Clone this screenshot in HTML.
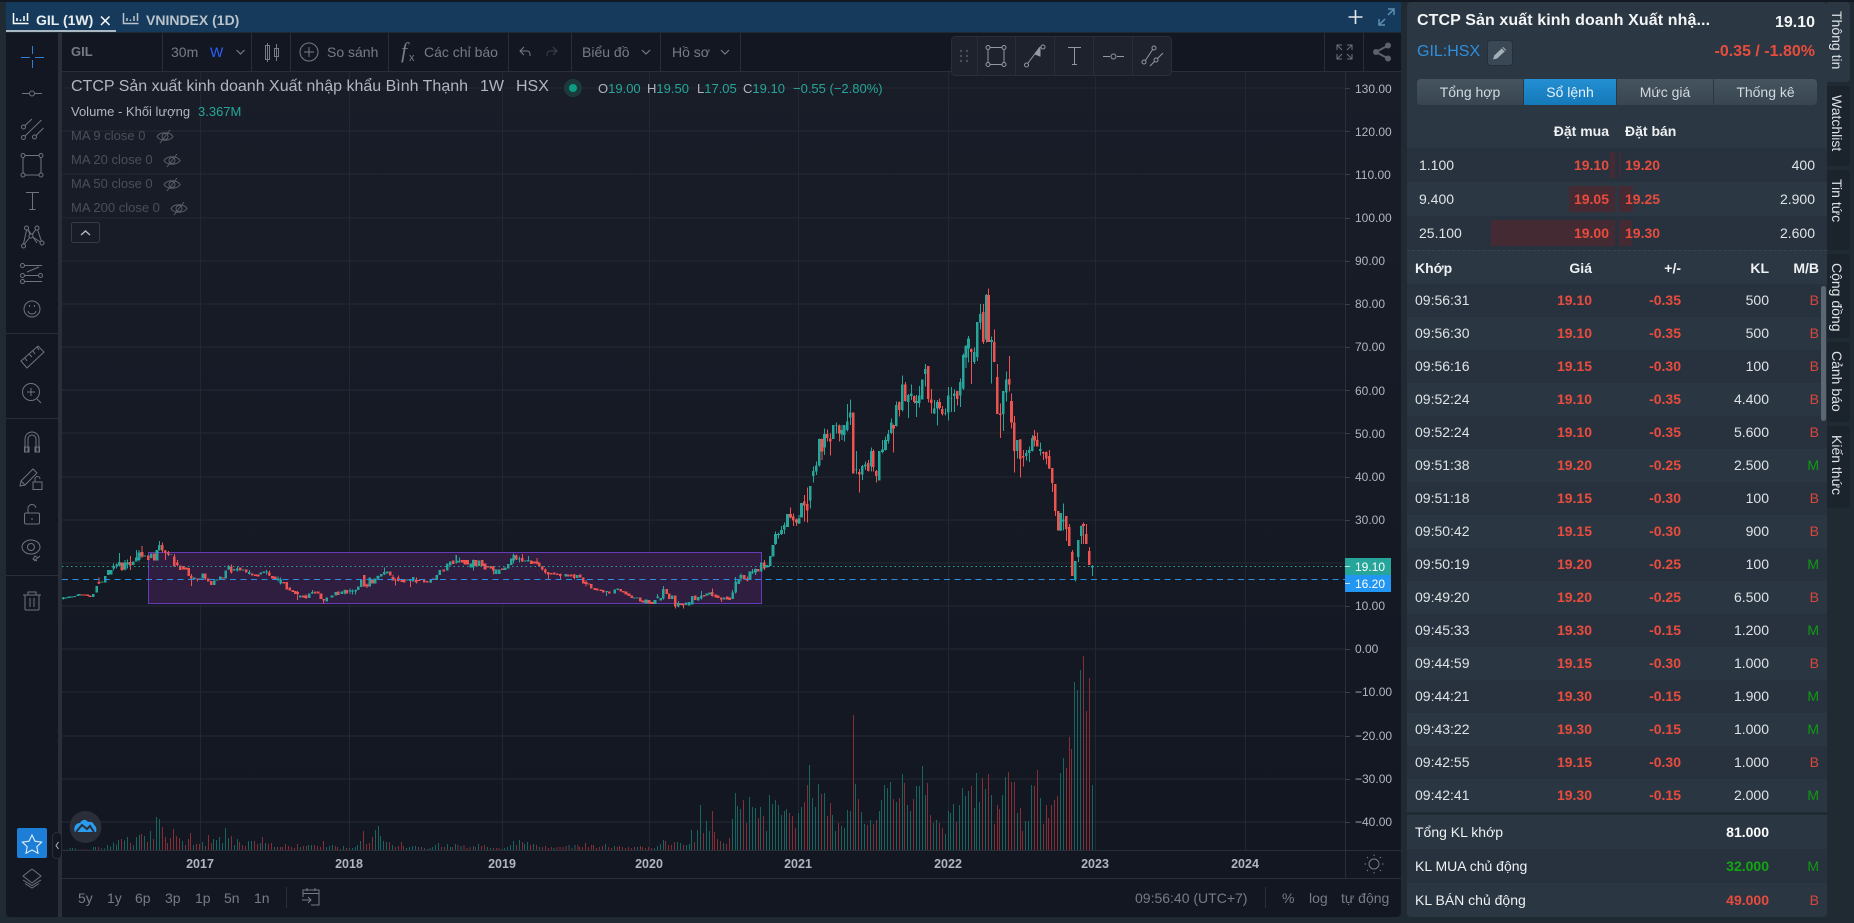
<!DOCTYPE html>
<html lang="vi"><head><meta charset="utf-8"><title>GIL (1W)</title>
<style>
*{box-sizing:border-box}
html,body{margin:0;padding:0;width:1854px;height:923px;overflow:hidden;background:#1f2a33;font-family:"Liberation Sans",sans-serif}
.a{position:absolute}
.t{position:absolute;white-space:nowrap;line-height:20px;height:20px}
#sv{position:absolute;left:0;top:0}
.bar{position:absolute;background:#442a33}
.r{height:33px;position:relative;font-size:14px;line-height:33px;color:#dfe3e6}
.r.l{background:#2a3641}.r.k{background:#28323e}
.r span{position:absolute;white-space:nowrap}
.c1{left:8px}.c2{right:235px;font-weight:bold;color:#e84c3d}.c3{right:146px;font-weight:bold;color:#e84c3d}.c4{right:58px}.c5{right:8px}
.B{color:#d9483b}.M{color:#0f9a12}
.st{position:absolute;left:1827px;width:23px;background:#1b232d;border-radius:0 4px 4px 0;color:#dfe3e6;font-size:14px;writing-mode:vertical-rl;text-align:left;line-height:20px;padding-top:9px;padding-right:3px;white-space:nowrap}
.seg{position:absolute;top:79px;height:26px;text-align:center;line-height:26px;font-size:14px;color:#d3d9de;background:linear-gradient(#45545f,#394652)}
.tb{position:absolute;top:33px;width:1px;height:38px;background:#2a2e39}
.g{color:#787b86}
.te{color:#26a69a}
.ma{color:#4a4e59;font-size:13px}
.pr{font-size:14px;font-weight:bold;color:#e84c3d}
</style></head><body>
<div class="a" style="left:0;top:0;width:1854px;height:2px;background:#131922"></div>
<!-- tab bar -->
<div class="a" style="left:6px;top:2px;width:1395px;height:30px;background:#163a5c"></div>
<div class="a" style="left:6px;top:30px;width:110px;height:2px;background:#a9b8c2"></div>
<!-- left toolbar -->
<div class="a" style="left:6px;top:33px;width:52px;height:884px;background:#131722;border-radius:0 0 0 4px"></div>
<div class="a" style="left:58px;top:33px;width:4px;height:884px;background:#2a2e39"></div>
<!-- top toolbar -->
<div class="a" style="left:62px;top:33px;width:1339px;height:38px;background:#131722"></div>
<div class="a" style="left:62px;top:71px;width:1339px;height:1px;background:#2a2e39"></div>
<div class="tb" style="left:162px"></div><div class="tb" style="left:251px"></div><div class="tb" style="left:290px"></div><div class="tb" style="left:388px"></div><div class="tb" style="left:508px"></div><div class="tb" style="left:571px"></div><div class="tb" style="left:660px"></div><div class="tb" style="left:740px"></div><div class="tb" style="left:1324px"></div><div class="tb" style="left:1363px"></div>
<!-- chart bg -->
<div class="a" style="left:62px;top:72px;width:1339px;height:845px;background:linear-gradient(#191d28,#131722 88%);border-radius:0 0 4px 0"></div>
<div class="a" style="left:62px;top:878px;width:1339px;height:1px;background:#2a2e39"></div>

<svg id="sv" width="1854" height="923" viewBox="0 0 1854 923" fill="none" xmlns="http://www.w3.org/2000/svg">
<!-- grid -->
<path shape-rendering="crispEdges" stroke="#252933" d="M62 88H1345M62 131H1345M62 174H1345M62 218H1345M62 261H1345M62 304H1345M62 347H1345M62 390H1345M62 433H1345M62 477H1345M62 520H1345M62 563H1345M62 606H1345M62 649H1345M62 692H1345M62 736H1345M62 779H1345M62 822H1345"/>
<path shape-rendering="crispEdges" stroke="#232731" d="M200.5 72V850M349.5 72V850M502.5 72V850M649.5 72V850M798.5 72V850M948.5 72V850M1095.5 72V850M1245.5 72V850"/>
<path shape-rendering="crispEdges" stroke="#2a2e39" d="M1345.5 72V878M62 850.5H1401"/>
<!-- purple zone -->
<rect x="148.5" y="552.5" width="613" height="51" fill="#2f1e40" stroke="#673ab7" shape-rendering="crispEdges"/>
<!-- volume left -->
<g transform="translate(60 790) scale(.33333)" stroke-width="3" shape-rendering="crispEdges">
<path stroke="#18655f" d="M12 178V180M21 178V180M30 174V180M37 174V180M46 175V180M56 178V180M100 171V180M107 171V180M124 175V180M133 175V180M142 165V180M152 170V180M160 158V180M169 163V180M176 150V180M194 151V180M202 141V180M220 167V180M229 141V180M238 135V180M253 138V180M271 123V180M289 81V180M298 87V180M367 153V180M400 165V180M427 156V180M461 147V180M470 150V180M478 141V180M487 159V180M496 114V180M505 144V180M523 165V180M532 147V180M565 153V180M574 153V180M601 159V180M616 159V180M643 171V180M721 171V180M745 165V180M754 165V180M799 171V180M808 168V180M817 165V180M850 168V180M868 174V180M877 174V180M886 171V180M893 165V180M901 153V180M946 120V180M955 108V180M961 138V180M970 153V180M979 156V180M997 165V180M1040 174V180M1049 171V180M1058 168V180M1067 168V180M1085 171V180M1103 177V180M1110 174V180M1117 171V180M1126 165V180M1135 159V180M1162 162V180M1171 171V180M1187 162V180M1203 168V180M1240 168V180M1256 162V180M1283 171V180M1292 174V180M1326 177V180M1333 174V180M1342 171V180M1351 165V180M1360 153V180M1378 150V180M1394 162V180M1403 156V180M1421 162V180M1439 171V180M1482 174V180M1527 165V180M1545 165V180"/>
<path stroke="#862e36" d="M63 178V180M72 178V180M80 178V180M90 178V180M115 171V180M185 147V180M211 159V180M245 132V180M262 156V180M280 147V180M307 111V180M316 141V180M323 159V180M331 144V180M340 117V180M349 138V180M358 144V180M376 165V180M385 147V180M391 129V180M409 162V180M418 162V180M436 168V180M445 135V180M454 159V180M514 138V180M538 156V180M547 165V180M556 168V180M583 153V180M592 162V180M607 141V180M625 162V180M634 159V180M652 171V180M661 171V180M668 171V180M677 162V180M685 168V180M694 171V180M703 174V180M712 162V180M730 168V180M739 168V180M763 165V180M772 168V180M781 171V180M790 153V180M826 168V180M832 171V180M841 177V180M859 174V180M910 123V180M919 162V180M928 159V180M937 141V180M988 156V180M1006 171V180M1015 168V180M1024 156V180M1031 168V180M1076 171V180M1094 174V180M1144 171V180M1153 171V180M1178 171V180M1194 165V180M1212 165V180M1221 174V180M1230 171V180M1247 171V180M1265 168V180M1274 165V180M1301 174V180M1310 174V180M1317 174V180M1369 165V180M1387 156V180M1412 165V180M1430 165V180M1448 171V180M1457 168V180M1466 174V180M1475 171V180M1491 171V180M1500 171V180M1509 171V180M1518 168V180M1536 174V180M1554 165V180"/>
</g>
<!-- volume right -->
<g transform="translate(570 740) scale(.33333)" stroke-width="3" shape-rendering="crispEdges">
<path stroke="#18655f" d="M106 312V330M133 318V330M202 321V330M253 324V330M262 318V330M271 312V330M280 300V330M322 306V330M331 309V330M349 315V330M358 312V330M364 270V330M382 270V330M391 195V330M409 243V330M418 273V330M460 309V330M487 237V330M496 159V330M502 198V330M511 207V330M538 171V330M547 201V330M556 204V330M571 201V330M589 273V330M598 165V330M607 192V330M616 180V330M625 195V330M634 225V330M643 213V330M649 207V330M685 219V330M694 201V330M718 75V330M727 174V330M736 201V330M745 132V330M763 159V330M787 225V330M796 273V330M814 258V330M823 264V330M832 210V330M841 213V330M856 132V330M874 216V330M883 252V330M901 240V330M928 213V330M934 180V330M943 135V330M952 144V330M961 126V330M979 186V330M997 102V330M1012 195V330M1021 213V330M1039 138V330M1048 138V330M1057 78V330M1066 165V330M1090 249V330M1099 240V330M1126 282V330M1135 213V330M1141 219V330M1150 192V330M1168 195V330M1177 144V330M1186 168V330M1195 153V330M1213 204V330M1219 99V330M1228 186V330M1246 147V330M1264 165V330M1297 165V330M1306 111V330M1342 219V330M1366 243V330M1375 243V330M1384 135V330M1411 174V330M1471 99V330M1480 54V330"/>
<path stroke="#862e36" d="M28 321V330M37 321V330M46 309V330M55 321V330M64 315V330M70 315V330M79 324V330M88 321V330M97 318V330M115 321V330M124 324V330M142 321V330M148 318V330M157 321V330M166 324V330M175 321V330M184 324V330M193 321V330M211 318V330M217 321V330M226 324V330M235 321V330M244 324V330M286 303V330M295 315V330M304 315V330M313 306V330M340 315V330M373 306V330M400 279V330M427 213V330M433 276V330M442 297V330M451 303V330M469 312V330M478 294V330M520 180V330M529 249V330M565 234V330M580 228V330M658 219V330M667 228V330M676 264V330M703 186V330M712 135V330M754 162V330M772 228V330M781 189V330M805 249V330M850 -75V330M865 177V330M892 255V330M910 252V330M919 240V330M970 177V330M988 174V330M1003 129V330M1030 177V330M1072 129V330M1081 225V330M1108 249V330M1117 264V330M1159 246V330M1204 138V330M1237 114V330M1255 102V330M1273 252V330M1282 195V330M1288 207V330M1315 96V330M1324 126V330M1333 126V330M1351 204V330M1357 273V330M1393 138V330M1402 90V330M1420 252V330M1429 195V330M1435 234V330M1444 195V330M1453 180V330M1462 168V330M1489 84V330"/>
</g>
<g shape-rendering="crispEdges"><path stroke="#862e36" d="M1069.5 737V850M1071.5 749V850M1083.5 656V850M1086.5 711V850M1089.5 678V850"/><path stroke="#18655f" d="M1074.5 682V850M1077.5 690V850M1080.5 670V850M1092.5 785V850"/></g>

<!-- candles group 1 -->
<g transform="translate(60 530) scale(.33333)" shape-rendering="crispEdges">
<path stroke="#26a69a" stroke-width="3" d="M10 201V209M161 100V122M170 100V116M178 69V110M195 90V122M203 88V116M229 60V95M237 60V95M298 33V62M506 105V120M532 110V125M568 120V133M620 120V133M654 140V155M662 143V163M757 180V192M855 178V193M870 176V192M878 178V194M887 178V194M954 136V148M973 113V135M1190 75V100M1112 147V159"/>
<path stroke="#ef5350" stroke-width="3" d="M117 142V162M186 97V123M211 78V120M246 48V84M307 38V68M316 60V90M325 63V78M343 72V110M352 90V110M394 132V168M412 145V155M436 130V150M514 103V130M628 122V138M713 183V210M738 194V207M791 207V220M921 160V174M999 135V152M1006 145V167M1015 136V155M1051 147V171M1069 143V160"/>
<path stroke="#26a69a" stroke-width="8" d="M10 203V207M18 203V206M27 200V204M36 199V202M44 198V201M53 194V198M58 192V197M100 192V201M110 168V187M127 154V158M136 138V158M145 120V135M153 120V133M161 108V115M170 103V110M178 96V107M195 98V118M203 97V104M220 95V105M229 82V95M237 67V90M254 76V80M274 70V84M291 60V92M298 45V60M333 72V74M403 143V149M420 144V146M428 130V146M463 151V165M471 148V152M481 140V150M497 122V145M506 108V118M523 117V122M532 115V122M550 118V121M568 126V132M602 127V133M611 125V129M620 125V128M654 146V150M662 148V161M721 196V202M748 190V204M757 186V190M800 202V214M816 196V203M827 186V196M845 185V192M855 180V191M870 181V185M878 181V185M887 180V185M895 170V180M904 150V171M929 142V170M945 145V160M954 138V145M964 132V140M973 126V133M982 125V130M1042 148V152M1051 147V153M1060 141V155M1112 149V157M1130 135V150M1139 120V135M1162 100V122M1171 94V106M1190 92V98"/>
<path stroke="#ef5350" stroke-width="8" d="M66 193V197M75 193V197M83 194V198M90 196V201M117 156V160M186 97V120M211 96V106M246 66V80M265 76V90M283 70V92M307 45V62M316 62V68M325 67V73M343 80V110M352 98V105M361 106V120M370 108V118M378 112V118M386 114V138M394 138V146M412 146V149M436 131V146M445 146V155M454 153V165M489 142V145M514 110V128M541 112V122M559 118V127M577 131V136M586 133V138M594 134V139M628 128V136M637 138V146M645 139V150M671 156V160M680 156V178M689 172V182M698 180V186M706 183V192M713 186V192M730 197V202M738 197V204M766 185V190M775 185V190M783 190V207M791 207V212M835 185V195M860 180V190M913 135V170M921 164V170M937 148V160M991 124V137M999 141V152M1006 149V151M1015 142V153M1025 148V156M1033 147V157M1069 148V157M1077 150V153M1093 148V158M1102 153V158M1120 146V150M1151 118V124M1180 92V102"/>
</g>
<!-- candles group 2 -->
<g transform="translate(450 530) scale(.33333)" shape-rendering="crispEdges">
<path stroke="#26a69a" stroke-width="3" d="M18 75V100M28 82V97M70 88V122M191 70V100M208 80V98M235 78V94M470 183V198M623 192V206M640 168V208M685 213V232M754 183V208M848 180V207M857 141V190M908 118V132"/>
<path stroke="#ef5350" stroke-width="3" d="M130 108V133M199 73V90M217 72V96M261 84V103M277 108V122M286 115V132M295 126V148M331 130V148M373 132V148M408 150V170M676 197V236M700 220V236M787 175V200M814 203V216"/>
<path stroke="#26a69a" stroke-width="8" d="M25 93V97M62 100V112M70 90V112M88 92V108M138 118V132M148 118V132M165 113V120M175 102V116M184 86V105M191 75V92M208 85V88M226 91V94M235 90V94M347 132V140M382 135V144M470 183V186M494 178V191M503 176V180M553 202V205M562 202V205M588 209V220M615 210V222M623 199V204M632 204V212M640 177V206M667 196V207M685 219V229M709 218V225M718 216V226M727 198V224M745 201V212M754 197V206M771 190V196M779 187V194M823 202V208M848 187V207M857 155V188M866 147V162"/>
<path stroke="#ef5350" stroke-width="8" d="M36 90V98M45 90V104M53 90V104M78 90V108M97 90V108M105 100V118M113 108V112M122 108V116M130 110V122M157 115V120M199 76V88M217 84V94M244 92V102M252 94V100M261 94V101M268 98V110M277 110V118M286 118V128M295 126V133M304 129V133M313 127V134M322 130V135M331 132V138M355 133V140M364 134V140M373 134V144M391 133V143M400 142V160M408 156V162M416 160V164M424 162V176M434 174V180M442 176V181M452 178V183M460 180V188M478 185V190M512 177V184M520 183V188M528 185V193M537 190V198M545 196V204M571 202V214M579 212V218M597 210V220M606 216V222M650 177V192M658 190V207M676 197V229M692 220V225M700 220V226M736 196V210M763 195V200M787 186V198M797 194V202M805 197V204M814 203V208M832 200V208M839 203V210"/>
</g>
<!-- candles group 3 -->
<g transform="translate(740 270) scale(.33333)" shape-rendering="crispEdges">
<path stroke="#26a69a" stroke-width="3" d="M3 910V935M38 897V912M47 895V915M107 785V825M116 788V806M125 768V795M133 758V792M177 735V762M211 648V716M220 590V638M229 575V615M238 505V590M254 475V555M289 458V490M306 465V510M313 465V515M322 402V485M331 388V465M349 543V612M367 585V630M376 575V600M394 533V605M428 510V550M437 500V542M445 480V520M454 445V492M469 395V470M487 316V425M505 372V444M514 343V390M530 375V441M538 348V412M556 282V350M583 390V432M592 390V467M616 415V436M625 351V452M634 351V426M643 358V426M661 325V411M670 250V360M678 225V294M686 198V278M703 232V282M712 156V273M721 102V178M739 72V218M755 200V340M790 363V483M799 304V395M832 510V565M859 540V572M868 530V576M877 495V545M901 518V557M962 729V783M970 700V782M1006 873V935M1015 810V876M1024 766V822M1057 885V918"/>
<path stroke="#ef5350" stroke-width="3" d="M22 920V935M73 870V900M152 712V745M160 730V768M169 745V768M193 675V755M202 652V758M246 505V570M262 478V515M271 490V557M298 464V515M358 597V668M385 570V605M400 538V605M409 600V638M461 463V548M478 395V440M496 336V395M523 376V400M565 288V398M574 357V431M599 385V418M607 408V437M652 363V407M694 235V342M730 102V222M746 55V216M763 178V276M772 282V432M781 400V504M808 258V365M815 370V476M823 438V608M841 507V623M850 540V590M884 480V530M892 487V530M910 544V570M919 544V583M928 540V597M937 594V666M946 642V738M979 738V813M988 762V828M997 840V918M1031 757V822M1039 762V822M1048 831V885"/>
<path stroke="#26a69a" stroke-width="8.5" d="M3 915V925M30 905V930M38 905V908M47 897V908M64 877V905M81 885V892M91 858V888M99 825V860M107 792V822M116 792V795M125 780V792M133 765V778M143 732V771M177 745V760M185 699V743M211 648V692M220 603V618M229 586V605M238 507V587M254 492V533M280 465V507M289 465V467M306 480V494M313 465V495M322 454V480M331 427V442M349 598V600M367 588V614M376 583V590M394 543V590M418 543V632M428 538V546M437 510V540M445 492V513M454 457V489M469 405V468M487 343V420M505 375V396M514 370V378M530 393V399M538 376V399M547 328V388M556 297V312M583 415V431M592 396V416M616 429V431M625 376V428M634 384V386M643 370V378M661 336V377M670 255V356M678 228V263M686 205V235M703 246V276M712 156V261M721 132V158M739 75V208M755 210V216M790 363V432M799 328V368M832 510V543M859 549V558M868 540V549M877 504V543M901 537V543M962 729V782M970 748V754M1006 873V930M1015 810V861M1024 768V798M1057 888V892"/>
<path stroke="#ef5350" stroke-width="8.5" d="M13 915V928M22 925V932M55 897V905M73 877V895M152 732V742M160 740V752M169 748V758M193 695V707M202 702V722M246 507V545M262 492V504M271 505V515M298 466V490M340 427V611M358 606V614M385 579V603M400 543V591M409 603V618M461 465V476M478 396V420M496 343V393M523 378V396M565 288V387M574 388V399M599 396V414M607 417V432M652 363V387M694 237V246M730 126V216M746 75V216M763 216V276M772 321V432M781 430V435M808 327V343M815 393V458M823 457V543M841 509V567M850 558V563M884 498V512M892 510V530M910 546V551M919 546V565M928 558V595M937 594V639M946 642V723M955 723V781M979 738V777M988 771V828M997 846V918M1031 762V768M1039 792V822M1048 843V885"/>
</g>
<!-- price lines -->
<path d="M62 566.5H1345" stroke="#26a69a" stroke-dasharray="1.5 3" shape-rendering="crispEdges"/>
<path d="M62 579.5H1345" stroke="#2a8fe0" stroke-dasharray="6 4.5" shape-rendering="crispEdges"/>
<path d="M1345 88.5h5M1345 131.5h5M1345 174.5h5M1345 218.5h5M1345 261.5h5M1345 304.5h5M1345 347.5h5M1345 390.5h5M1345 433.5h5M1345 477.5h5M1345 520.5h5M1345 606.5h5M1345 649.5h5M1345 692.5h5M1345 736.5h5M1345 779.5h5M1345 822.5h5" stroke="#3a3e49" shape-rendering="crispEdges"/>
<!-- axis labels -->
<g font-family="Liberation Sans" font-size="12" fill="#b2b5be">
<text x="1355" y="93">130.00</text><text x="1355" y="136">120.00</text><text x="1355" y="179">110.00</text><text x="1355" y="222">100.00</text><text x="1355" y="265">90.00</text><text x="1355" y="308">80.00</text><text x="1355" y="351">70.00</text><text x="1355" y="395">60.00</text><text x="1355" y="438">50.00</text><text x="1355" y="481">40.00</text><text x="1355" y="524">30.00</text><text x="1355" y="610">10.00</text><text x="1355" y="653">0.00</text><text x="1355" y="696">−10.00</text><text x="1355" y="740">−20.00</text><text x="1355" y="783">−30.00</text><text x="1355" y="826">−40.00</text>
</g>
<g font-family="Liberation Sans" font-size="12.5" font-weight="bold" fill="#b2b5be" text-anchor="middle">
<text x="200" y="868">2017</text><text x="349" y="868">2018</text><text x="502" y="868">2019</text><text x="649" y="868">2020</text><text x="798" y="868">2021</text><text x="948" y="868">2022</text><text x="1095" y="868">2023</text><text x="1245" y="868">2024</text>
</g>
<rect x="1345" y="558" width="46" height="17" fill="#26a69a"/><rect x="1345" y="575" width="46" height="17" fill="#2196f3"/>
<g font-family="Liberation Sans" font-size="12" fill="#fff"><text x="1355" y="571">19.10</text><text x="1355" y="588">16.20</text></g>
<path d="M1345 566.5h5M1345 583.5h5" stroke="#fff" stroke-opacity=".7" shape-rendering="crispEdges"/>

<!-- tab icons -->
<path d="M13.5 13V23.5H28.5M17 21v-3M20.500 21v-1.500M24 21v-5M27.500 21V13" stroke="#fff" stroke-width="1.500"/>
<path d="M123.500 13V23.500H138.500M127 21v-3M130.500 21v-1.500M134 21v-5M137.500 21V13" stroke="#b8c3cc" stroke-width="1.500"/>
<path d="M101 16.500l8.500 8.500M109.500 16.500l-8.500 8.500" stroke="#fff" stroke-width="1.500"/>
<path d="M1355.500 10v14M1348.500 17h14" stroke="#e4e9ed" stroke-width="1.600"/>
<path d="M1379 19v6h6M1380 24l5-5M1394 15v-6h-6M1393 10l-5 5" stroke="#5d8fb4" stroke-width="1.500"/>
<!-- left toolbar icons -->
<path d="M32.5 46V54M32.5 60V68M21 57.5H30M35 57.5H44" stroke="#2f7fd6"/>
<g stroke="#6f737e">
<path d="M22 93.5H29.5M34.5 93.5H42"/><circle cx="32" cy="93.5" r="2.5"/>
<path d="M25 125.500L32 119M25 136L41.500 120M36 135.500L43.500 128"/><circle cx="23.500" cy="127" r="2"/><circle cx="23.500" cy="137.500" r="2"/><circle cx="34.500" cy="137" r="2"/>
<rect x="23" y="155.500" width="18" height="19.500"/><circle cx="23" cy="155.500" r="2" fill="#131722"/><circle cx="41" cy="155.500" r="2" fill="#131722"/><circle cx="23" cy="175" r="2" fill="#131722"/><circle cx="41" cy="175" r="2" fill="#131722"/>
<path d="M26 192.500H39M32.500 192.500V209.500M29.500 209.500H35.500"/>
<path d="M23 246L27 228L31 236L37 228L42 243M27 228L37 243M37 228L23 246M31 236L42 243"/><circle cx="23.500" cy="246" r="2" fill="#131722"/><circle cx="26.500" cy="228" r="2" fill="#131722"/><circle cx="37" cy="228" r="2" fill="#131722"/><circle cx="42" cy="243" r="2" fill="#131722"/><circle cx="31" cy="236" r="2" fill="#131722"/>
<path d="M25 265.500H42M25 275.500H38M25 281.500H42M27 272l12-5" stroke-dasharray="none"/><circle cx="22.500" cy="265.500" r="2"/><circle cx="22.500" cy="275.500" r="2"/><circle cx="22.500" cy="281.500" r="2"/><circle cx="40.500" cy="275.500" r="2"/>
<circle cx="32" cy="309" r="8"/><path d="M28 311c1 4 7 4 8 0"/><path d="M29.500 305v2M34.500 305v2"/>
<path d="M21 361l17-15 6 6-17 16z M25 358l2 3M29 354l3 3M33 351l2 3M37 347l2 3"/>
<circle cx="31" cy="392" r="8.500"/><path d="M37 399l4 4M31 388v8M27 392h8"/>
<path d="M25 452v-13a7 7 0 0 1 14 0v13M28 452v-13a4 4 0 0 1 8 0v13M24.500 447h4.500v5h-4.500zM35 447h4.500v5H35z"/>
<path d="M21 481l12-12 4 4-12 12-5 1z M21 481l4 4"/><rect x="33" y="482" width="9" height="7.500"/><path d="M35 482v-3a2.500 2.500 0 0 1 5 0"/>
<rect x="24.500" y="513" width="15" height="11" rx="1.500"/><path d="M28 513v-4a4 4 0 0 1 8-1"/><path d="M32 518v2" />
<ellipse cx="31" cy="547" rx="9" ry="7"/><circle cx="31" cy="547" r="3.500"/><path d="M34 561l6-5M37 561l-4-2 2-3 3 2"/>
<path d="M23 595h18M28 595v-3h8v3M25 595v14a1 1 0 0 0 1 1h12a1 1 0 0 0 1-1v-14M30 598v9M34 598v9"/>
<path d="M32 869l9 7-9 7-9-7zM23 880l9 5.500 9-5.500M25 883.500l7 4.500 7-4.500"/>
</g>
<path d="M6 333.500H58M6 418.500H58M6 575.500H58" stroke="#2a2e39" shape-rendering="crispEdges"/>
<rect x="17" y="828" width="30" height="30" rx="2" fill="#1c7ed6"/>
<path d="M32 835l3 6.200 6.600.9-4.800 4.600 1.200 6.500-6-3.200-6 3.200 1.200-6.500-4.800-4.600 6.600-.9z" stroke="#dfeefa" stroke-width="1.100"/>
<rect x="52.500" y="832.500" width="9" height="26" rx="4" fill="#131722" stroke="#2a2e39"/>
<path d="M58.500 842l-2.500 3.500 2.500 3.500" stroke="#b2b5be"/>
<!-- top toolbar icons -->
<path d="M236.500 50l4 4 4-4" stroke="#787b86" stroke-width="1.200"/>
<rect x="265.500" y="45.500" width="4" height="14" stroke="#787b86"/><rect x="274.500" y="48.500" width="4" height="8" stroke="#787b86"/><path d="M267.500 43v19M276.500 44v17" stroke="#787b86"/>
<circle cx="309" cy="52" r="9" stroke="#787b86"/><path d="M309 47v10M304 52h10" stroke="#787b86"/>
<path d="M529 47l-4 4 4 4M525 51h7a3 3 0 0 1 3 3v2" stroke="#787b86" transform="translate(-5 0)"/>
<path d="M553 47l4 4-4 4M557 51h-7a3 3 0 0 0-3 3v2" stroke="#3e424d"/>
<path d="M642 50l4 4 4-4M721 50l4 4 4-4" stroke="#787b86" stroke-width="1.200"/>
<path d="M1337 50v-5h5M1352 50v-5h-5M1337 54v5h5M1352 54v5h-5M1337 45l5 5M1352 45l-5 5M1337 59l5-5M1352 59l-5-5" stroke="#6d707b"/>
<circle cx="1376" cy="52" r="3" fill="#5d616c"/><circle cx="1388" cy="45.500" r="3" fill="#5d616c"/><circle cx="1388" cy="58.500" r="3" fill="#5d616c"/><path d="M1376 52l12-6.500M1376 52l12 6.500" stroke="#5d616c" stroke-width="2"/>
<!-- floating toolbar -->
<rect x="951.500" y="36.500" width="220" height="39" rx="4" fill="#1e222d" stroke="#2a2e39"/>
<path d="M977.500 37V75M1015.500 37V75M1054.500 37V75M1093.500 37V75M1132.500 37V75" stroke="#2a2e39" shape-rendering="crispEdges"/>
<g fill="#4a4e59"><circle cx="961" cy="51" r="1.200"/><circle cx="967" cy="51" r="1.200"/><circle cx="961" cy="56" r="1.200"/><circle cx="967" cy="56" r="1.200"/><circle cx="961" cy="61" r="1.200"/><circle cx="967" cy="61" r="1.200"/></g>
<g stroke="#9598a1">
<rect x="988" y="47.500" width="16" height="17"/><circle cx="988" cy="47.500" r="2" fill="#1e222d"/><circle cx="1004" cy="47.500" r="2" fill="#1e222d"/><circle cx="988" cy="64.500" r="2" fill="#1e222d"/><circle cx="1004" cy="64.500" r="2" fill="#1e222d"/>
<path d="M1028 63l12-16"/><circle cx="1026.500" cy="65" r="2"/><circle cx="1043" cy="47" r="2"/><path d="M1035 54l5-6 0 8z" fill="#9598a1"/>
<path d="M1068 47.500h13M1074.500 47.500v17M1072 64.500h5"/>
<path d="M1103 56.500h7M1117 56.500h7"/><circle cx="1113.500" cy="56.500" r="2.500"/>
<path d="M1145 61l8-12M1150 66l13-13"/><circle cx="1144" cy="62" r="2" fill="#1e222d"/><circle cx="1154" cy="48" r="2" fill="#1e222d"/><circle cx="1156" cy="60" r="2" fill="#1e222d"/>
</g>
<!-- eye slash -->
<g stroke="#5a5e69">
<path d="M157 136.500c3-5 13-5 16 0-3 5-13 5-16 0zM160 143l10-13"/><circle cx="165" cy="136.500" r="3"/>
<path d="M164 160.500c3-5 13-5 16 0-3 5-13 5-16 0zM167 167l10-13"/><circle cx="172" cy="160.500" r="3"/>
<path d="M164 184.500c3-5 13-5 16 0-3 5-13 5-16 0zM167 191l10-13"/><circle cx="172" cy="184.500" r="3"/>
<path d="M171 208.500c3-5 13-5 16 0-3 5-13 5-16 0zM174 215l10-13"/><circle cx="179" cy="208.500" r="3"/>
</g>
<rect x="71.500" y="222.500" width="28" height="20" rx="2" stroke="#363a45"/>
<path d="M81 235l4.500-4 4.500 4" stroke="#b2b5be" stroke-width="1.500"/>
<!-- status dot -->
<circle cx="573" cy="88" r="9" fill="#1c3a3c"/><circle cx="573" cy="88" r="4" fill="#0e9b86"/>
<!-- logo -->
<ellipse cx="85.500" cy="827" rx="16" ry="16" fill="#2a2e39"/>
<path d="M75 832c-2-5 1-9 5-9 2-4 6-4 8-1 3-1 6 1 6 3 2 1 3 4 2 7z" fill="#2b9df0"/>
<path d="M76 832l6-7 5 4 3-3 4 6" stroke="#2a2e39" stroke-width="2"/>
<!-- calendar -->
<path d="M303 897v-7h16v15h-8M303 893.500h16M307 888v3M315 888v3M302 900h9M308 897l3 3-3 3" stroke="#787b86"/>
<path d="M286.500 887V908M1265.500 887V908" stroke="#2a2e39" shape-rendering="crispEdges"/>
<!-- gear -->
<circle cx="1374" cy="864" r="5" stroke="#787b86"/><path d="M1374 856v-1.500M1374 873.500V872M1366 864h-1.500M1383.500 864H1382M1368 858l-1-1M1381 871l-1-1M1368 870l-1 1M1381 857l-1 1" stroke="#787b86"/>
</svg>

<!-- tab text -->
<div class="t" style="left:36px;top:10px;font-size:14px;font-weight:bold;color:#e8edf0">GIL (1W)</div>
<div class="t" style="left:146px;top:10px;font-size:14px;font-weight:bold;color:#b8c3cc">VNINDEX (1D)</div>
<!-- toolbar text -->
<div class="t g" style="left:71px;top:42px;font-size:13px;font-weight:bold">GIL</div>
<div class="t g" style="left:171px;top:42px;font-size:14px">30m</div>
<div class="t" style="left:210px;top:42px;font-size:14px;color:#2962ff">W</div>
<div class="t g" style="left:327px;top:42px;font-size:14px">So sánh</div>
<div class="t g" style="left:401px;top:41px;font:italic 22px/20px 'Liberation Serif',serif">f</div>
<div class="t g" style="left:409px;top:48px;font-size:11px">x</div>
<div class="t g" style="left:424px;top:42px;font-size:14px">Các chỉ báo</div>
<div class="t g" style="left:582px;top:42px;font-size:14px">Biểu đồ</div>
<div class="t g" style="left:672px;top:42px;font-size:14px">Hồ sơ</div>
<!-- legend -->
<div class="t" style="left:71px;top:77px;font-size:16px;color:#b2b5be">CTCP Sản xuất kinh doanh Xuất nhập khẩu Bình Thạnh</div>
<div class="t" style="left:480px;top:77px;font-size:16px;color:#b2b5be">1W</div>
<div class="t" style="left:516px;top:77px;font-size:16px;color:#b2b5be">HSX</div>
<div class="t" style="left:598px;top:79px;font-size:13px;color:#b2b5be">O<span class="te">19.00</span></div>
<div class="t" style="left:647px;top:79px;font-size:13px;color:#b2b5be">H<span class="te">19.50</span></div>
<div class="t" style="left:697px;top:79px;font-size:13px;color:#b2b5be">L<span class="te">17.05</span></div>
<div class="t" style="left:743px;top:79px;font-size:13px;color:#b2b5be">C<span class="te">19.10</span></div>
<div class="t te" style="left:793px;top:79px;font-size:13px">−0.55 (−2.80%)</div>
<div class="t" style="left:71px;top:102px;font-size:13px;color:#b2b5be">Volume - Khối lượng</div>
<div class="t te" style="left:198px;top:102px;font-size:13px">3.367M</div>
<div class="t ma" style="left:71px;top:126px">MA 9 close 0</div>
<div class="t ma" style="left:71px;top:150px">MA 20 close 0</div>
<div class="t ma" style="left:71px;top:174px">MA 50 close 0</div>
<div class="t ma" style="left:71px;top:198px">MA 200 close 0</div>
<!-- bottom bar -->
<div class="t" style="left:78px;top:888px;font-size:14px;color:#787b86">5y</div>
<div class="t" style="left:107px;top:888px;font-size:14px;color:#787b86">1y</div>
<div class="t" style="left:135px;top:888px;font-size:14px;color:#787b86">6p</div>
<div class="t" style="left:165px;top:888px;font-size:14px;color:#787b86">3p</div>
<div class="t" style="left:195px;top:888px;font-size:14px;color:#787b86">1p</div>
<div class="t" style="left:224px;top:888px;font-size:14px;color:#787b86">5n</div>
<div class="t" style="left:254px;top:888px;font-size:14px;color:#787b86">1n</div>
<div class="t g" style="left:1135px;top:888px;font-size:14px">09:56:40 (UTC+7)</div>
<div class="t g" style="left:1282px;top:888px;font-size:14px">%</div>
<div class="t g" style="left:1309px;top:888px;font-size:14px">log</div>
<div class="t g" style="left:1341px;top:888px;font-size:14px">tự động</div>

<!-- right panel -->
<div class="a" style="left:1407px;top:2px;width:420px;height:915px;background:#2b3743;border-radius:4px"></div>
<div class="a" style="left:1827px;top:2px;width:23px;height:80px;background:#2b3743;border-radius:0 4px 4px 0"></div>
<div class="st" style="top:2px;height:80px;background:#2b3743">Thông tin</div>
<div class="st" style="top:86px;height:80px">Watchlist</div>
<div class="st" style="top:170px;height:80px">Tin tức</div>
<div class="st" style="top:254px;height:84px">Cộng đồng</div>
<div class="st" style="top:342px;height:80px">Cảnh báo</div>
<div class="st" style="top:426px;height:82px">Kiến thức</div>
<div class="t" style="left:1417px;top:11px;font-size:16px;font-weight:bold;color:#f2f4f5;letter-spacing:.1px">CTCP Sản xuất kinh doanh Xuất nhậ...</div>
<div class="t" style="right:39px;top:13px;font-size:16px;font-weight:bold;color:#f2f4f5">19.10</div>
<div class="t" style="left:1417px;top:42px;font-size:16px;color:#2f8fdc">GIL:HSX</div>
<svg class="a" style="left:1487px;top:40px" width="26" height="26" viewBox="0 0 26 26" fill="none"><rect x=".5" y=".5" width="25" height="25" rx="3" fill="#3a4754" stroke="#26303c"/><path d="M6 19.500l1.200-4 9-8.500 3 3-9 8.500z" fill="#a3afb9"/><path d="M15 8l3 3" stroke="#3a4754"/></svg>
<div class="t" style="right:39px;top:42px;font-size:16px;font-weight:bold;color:#e84c3d">-0.35 / -1.80%</div>
<div class="seg" style="left:1417px;width:106px;border-radius:4px 0 0 4px">Tổng hợp</div>
<div class="seg" style="left:1524px;width:92px;background:linear-gradient(#238fd2,#1579b9);color:#e7f2fa">Sổ lệnh</div>
<div class="seg" style="left:1617px;width:96px">Mức giá</div>
<div class="seg" style="left:1714px;width:103px;border-radius:0 4px 4px 0">Thống kê</div>
<div class="t" style="right:245px;top:121px;font-size:14px;font-weight:bold;color:#eef0f2">Đặt mua</div>
<div class="t" style="left:1625px;top:121px;font-size:14px;font-weight:bold;color:#eef0f2">Đặt bán</div>
<div class="a" style="left:1407px;top:148px;width:420px;height:34px;background:#28323e"></div>
<div class="a" style="left:1407px;top:216px;width:420px;height:34px;background:#28323e"></div>
<div class="a" style="left:1407px;top:250px;width:420px;height:1px;border-top:1px dashed #38444f"></div>
<div class="bar" style="left:1610px;top:152px;width:5px;height:26px"></div><div class="bar" style="left:1619px;top:152px;width:2px;height:26px"></div>
<div class="bar" style="left:1569px;top:186px;width:46px;height:26px"></div><div class="bar" style="left:1619px;top:186px;width:14px;height:26px"></div>
<div class="bar" style="left:1491px;top:220px;width:124px;height:26px"></div><div class="bar" style="left:1619px;top:220px;width:13px;height:26px"></div>
<div class="t" style="left:1419px;top:155px;font-size:14px;color:#dfe3e6">1.100</div>
<div class="t" style="left:1419px;top:189px;font-size:14px;color:#dfe3e6">9.400</div>
<div class="t" style="left:1419px;top:223px;font-size:14px;color:#dfe3e6">25.100</div>
<div class="t pr" style="right:245px;top:155px">19.10</div><div class="t pr" style="right:245px;top:189px">19.05</div><div class="t pr" style="right:245px;top:223px">19.00</div>
<div class="t pr" style="left:1625px;top:155px">19.20</div><div class="t pr" style="left:1625px;top:189px">19.25</div><div class="t pr" style="left:1625px;top:223px">19.30</div>
<div class="t" style="right:39px;top:155px;font-size:14px;color:#dfe3e6">400</div>
<div class="t" style="right:39px;top:189px;font-size:14px;color:#dfe3e6">2.900</div>
<div class="t" style="right:39px;top:223px;font-size:14px;color:#dfe3e6">2.600</div>
<div class="t" style="left:1415px;top:258px;font-size:14px;font-weight:bold;color:#eef0f2">Khớp</div>
<div class="t" style="right:262px;top:258px;font-size:14px;font-weight:bold;color:#eef0f2">Giá</div>
<div class="t" style="right:173px;top:258px;font-size:14px;font-weight:bold;color:#eef0f2">+/-</div>
<div class="t" style="right:85px;top:258px;font-size:14px;font-weight:bold;color:#eef0f2">KL</div>
<div class="t" style="right:35px;top:258px;font-size:14px;font-weight:bold;color:#eef0f2">M/B</div>
<div class="a" style="left:1407px;top:284px;width:420px">
<div class="r k"><span class="c1">09:56:31</span><span class="c2">19.10</span><span class="c3">-0.35</span><span class="c4">500</span><span class="c5 B">B</span></div>
<div class="r l"><span class="c1">09:56:30</span><span class="c2">19.10</span><span class="c3">-0.35</span><span class="c4">500</span><span class="c5 B">B</span></div>
<div class="r k"><span class="c1">09:56:16</span><span class="c2">19.15</span><span class="c3">-0.30</span><span class="c4">100</span><span class="c5 B">B</span></div>
<div class="r l"><span class="c1">09:52:24</span><span class="c2">19.10</span><span class="c3">-0.35</span><span class="c4">4.400</span><span class="c5 B">B</span></div>
<div class="r k"><span class="c1">09:52:24</span><span class="c2">19.10</span><span class="c3">-0.35</span><span class="c4">5.600</span><span class="c5 B">B</span></div>
<div class="r l"><span class="c1">09:51:38</span><span class="c2">19.20</span><span class="c3">-0.25</span><span class="c4">2.500</span><span class="c5 M">M</span></div>
<div class="r k"><span class="c1">09:51:18</span><span class="c2">19.15</span><span class="c3">-0.30</span><span class="c4">100</span><span class="c5 B">B</span></div>
<div class="r l"><span class="c1">09:50:42</span><span class="c2">19.15</span><span class="c3">-0.30</span><span class="c4">900</span><span class="c5 B">B</span></div>
<div class="r k"><span class="c1">09:50:19</span><span class="c2">19.20</span><span class="c3">-0.25</span><span class="c4">100</span><span class="c5 M">M</span></div>
<div class="r l"><span class="c1">09:49:20</span><span class="c2">19.20</span><span class="c3">-0.25</span><span class="c4">6.500</span><span class="c5 B">B</span></div>
<div class="r k"><span class="c1">09:45:33</span><span class="c2">19.30</span><span class="c3">-0.15</span><span class="c4">1.200</span><span class="c5 M">M</span></div>
<div class="r l"><span class="c1">09:44:59</span><span class="c2">19.15</span><span class="c3">-0.30</span><span class="c4">1.000</span><span class="c5 B">B</span></div>
<div class="r k"><span class="c1">09:44:21</span><span class="c2">19.30</span><span class="c3">-0.15</span><span class="c4">1.900</span><span class="c5 M">M</span></div>
<div class="r l"><span class="c1">09:43:22</span><span class="c2">19.30</span><span class="c3">-0.15</span><span class="c4">1.000</span><span class="c5 M">M</span></div>
<div class="r k"><span class="c1">09:42:55</span><span class="c2">19.15</span><span class="c3">-0.30</span><span class="c4">1.000</span><span class="c5 B">B</span></div>
<div class="r l"><span class="c1">09:42:41</span><span class="c2">19.30</span><span class="c3">-0.15</span><span class="c4">2.000</span><span class="c5 M">M</span></div>
</div>
<div class="a" style="left:1821px;top:286px;width:5px;height:135px;background:#5b6873;border-radius:3px"></div>
<div class="a" style="left:1407px;top:812px;width:420px;height:3px;background:#1f2a33"></div>
<div class="a" style="left:1407px;top:815px;width:420px;height:102px;border-radius:0 0 4px 4px">
<div class="r l" style="height:34px;line-height:34px"><span class="c1" style="color:#eef0f2">Tổng KL khớp</span><span class="c4" style="font-weight:bold;color:#fff">81.000</span></div>
<div class="r k" style="height:34px;line-height:34px"><span class="c1" style="color:#eef0f2">KL MUA chủ động</span><span class="c4 M" style="font-weight:bold;color:#10a810">32.000</span><span class="c5 M">M</span></div>
<div class="r l" style="height:34px;line-height:34px;border-radius:0 0 4px 4px"><span class="c1" style="color:#eef0f2">KL BÁN chủ động</span><span class="c4" style="font-weight:bold;color:#e84c3d">49.000</span><span class="c5 B">B</span></div>
</div>
</body></html>
